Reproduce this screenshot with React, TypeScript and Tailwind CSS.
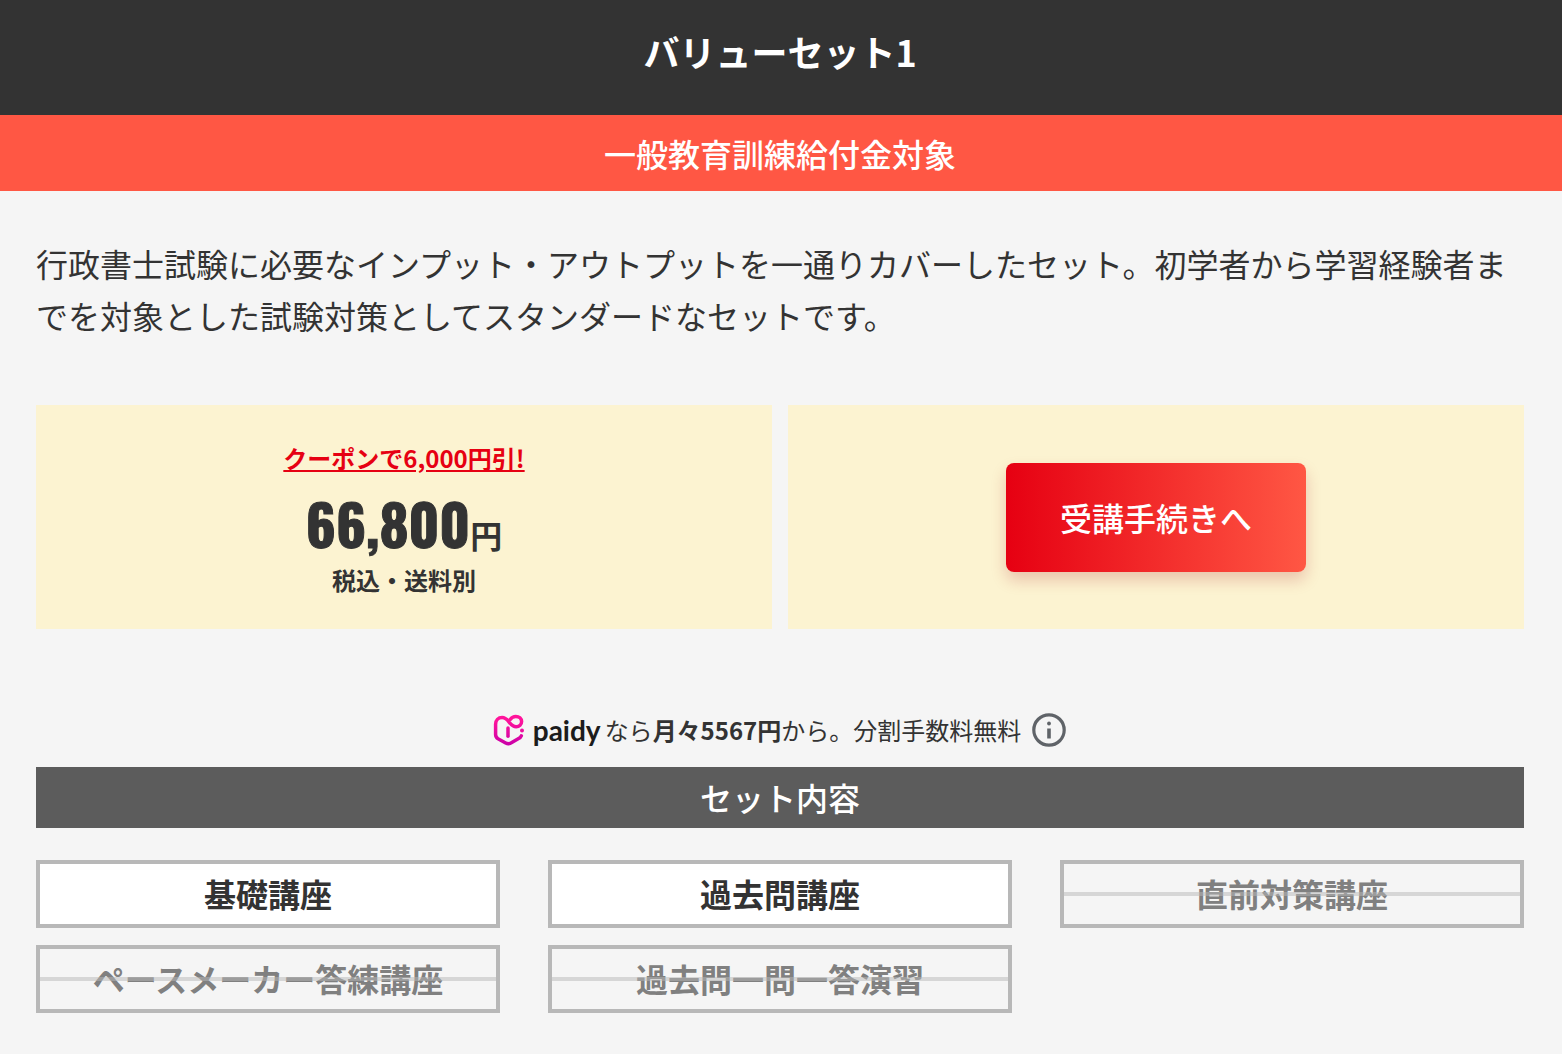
import type { ReactNode } from 'react';

interface Course {
  name: string;
  included: boolean;
}

const courses: Course[] = [
  { name: '基礎講座', included: true },
  { name: '過去問講座', included: true },
  { name: '直前対策講座', included: false },
  { name: 'ペースメーカー答練講座', included: false },
  { name: '過去問一問一答演習', included: false },
];

function PriceCell({ children }: { children: ReactNode }) {
  return (
    <div className="flex h-56 flex-1 flex-col items-center justify-center bg-[#fcf3d1]">
      {children}
    </div>
  );
}

function CourseItem({ name, included }: Course) {
  if (included) {
    return (
      <li className="border-4 border-[#b8b8b8] bg-white pt-[3px] pb-[5px] text-center text-[32px] leading-[52px] font-bold">
        {name}
      </li>
    );
  }
  return (
    <li className="relative border-4 border-[#b8b8b8] pt-[3px] pb-[5px] text-center text-[32px] leading-[52px] font-bold text-[#808080]">
      {name}
      {/* Strike line over the whole cell */}
      <span className="absolute inset-x-0 top-7 h-1 bg-[#b8b8b8]/50" />
    </li>
  );
}

function PaidyLogo() {
  return (
    <span className="flex items-center gap-2">
      <svg className="h-8 w-8" viewBox="0 0 32 32" fill="none" aria-hidden="true">
        <defs>
          <linearGradient id="paidy" x1="0" y1="0" x2="0" y2="32" gradientUnits="userSpaceOnUse">
            <stop offset="0.2" stopColor="#ff149b" />
            <stop offset="1" stopColor="#c800a8" />
          </linearGradient>
        </defs>
        <g stroke="url(#paidy)" strokeWidth="3.5" strokeLinecap="round" strokeLinejoin="round">
          <path d="M17.4 5.2C18.8 3.2 20.6 2.4 22.8 2.4c3.3 0 5.8 2.3 5.8 5.2s-2.4 5.2-5.4 5.2c-3.2 0-4.9-1.9-6.9-4.4C14.2 5.6 12.4 3.6 9.1 3.6 5.2 3.6 2.6 6.4 2.6 10.2v10.3c0 2 .8 3.3 2.4 4.3l7.7 4.2c1.7.9 3.5.9 5.2 0l7.7-4.4c1.4-.8 2.2-1.6 2.7-2.8" />
          <path d="M15 14v8.2" />
        </g>
        <circle cx="29" cy="16.6" r="2" fill="#ee10a0" />
      </svg>
      <span className="font-['Lato'] text-[28px] leading-8 font-bold text-[#1c1c1c]">paidy</span>
    </span>
  );
}

export default function App() {
  return (
    <main className="min-h-screen bg-[#f5f5f5] font-['Noto_Sans_CJK_JP',sans-serif] text-[#333]">
      <h1 className="bg-[#333] pt-6 pr-0.5 pb-9 text-center text-[36px] leading-[55px] font-bold text-white">
        バリューセット1
      </h1>
      <p className="bg-[#ff5744] py-3 pr-0.5 text-center text-[32px] leading-[52px] font-medium text-white">
        一般教育訓練給付金対象
      </p>

      <div className="pt-[46px] pr-[38px] pb-10 pl-9">
        <p className="text-[32px] leading-[52px]">
          行政書士試験に必要なインプット・アウトプットを一通りカバーしたセット。初学者から学習経験者までを対象とした試験対策としてスタンダードなセットです。
        </p>

        {/* Price and order button */}
        <div className="mt-16 flex gap-4">
          <PriceCell>
            <a href="#coupon" className="mt-1 text-2xl leading-10 font-bold text-[#e60012] underline">
              クーポンで6,000円引!
            </a>
            <p className="flex items-baseline pt-2 text-[32px] leading-10 font-bold">
              <span className="font-['Oswald','Liberation_Sans_Narrow','DejaVu_Sans_Condensed'] text-[56px] leading-[74px] [-webkit-text-stroke:1px_#333]">
                66,800
              </span>
              円
            </p>
            <p className="text-2xl leading-10 font-bold">税込・送料別</p>
          </PriceCell>
          <PriceCell>
            <button
              type="button"
              className="w-[300px] rounded-lg bg-linear-to-r/srgb from-[#e60012] to-[#ff5744] py-7 text-[32px] leading-[53px] font-medium text-white shadow-[0_8px_16px_rgba(160,0,18,0.2)]"
            >
              受講手続きへ
            </button>
          </PriceCell>
        </div>

        {/* Instalment note */}
        <div className="mt-20 flex items-center justify-center gap-1 pl-0.5 text-2xl leading-[42px]">
          <PaidyLogo />
          <p>
            なら<b>月々5567円</b>から。分割手数料無料
          </p>
          <button type="button" aria-label="詳細" className="ml-1">
            <svg className="h-10 w-10" viewBox="0 0 40 40" fill="none" aria-hidden="true">
              <circle cx="20" cy="20" r="15.2" stroke="#5f6368" strokeWidth="3.2" />
              <path d="M20 18.5v10" stroke="#5f6368" strokeWidth="3.6" />
              <circle cx="20" cy="13.5" r="1.9" fill="#5f6368" />
            </svg>
          </button>
        </div>

        <h2 className="mt-4 bg-[#5c5c5c] py-1 text-center text-[32px] leading-[53px] font-medium text-white">
          セット内容
        </h2>
        <ul className="mt-8 grid grid-cols-3 gap-x-12 gap-y-[17px]">
          {courses.map((course) => (
            <CourseItem key={course.name} {...course} />
          ))}
        </ul>
      </div>
    </main>
  );
}
